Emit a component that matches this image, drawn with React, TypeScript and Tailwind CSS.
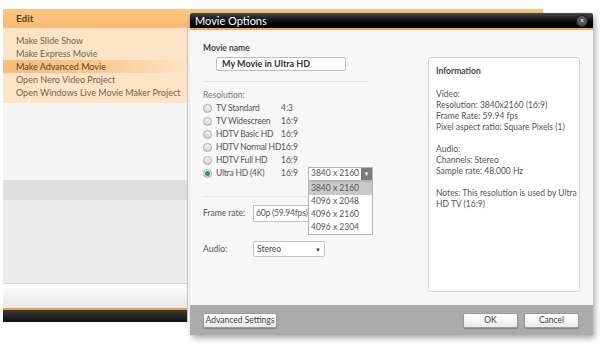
import { useState } from "react";

const menuItems = [
  "Make Slide Show",
  "Make Express Movie",
  "Make Advanced Movie",
  "Open Nero Video Project",
  "Open Windows Live Movie Maker Project",
];

const resolutions = [
  { name: "TV Standard", ratio: "4:3" },
  { name: "TV Widescreen", ratio: "16:9" },
  { name: "HDTV Basic HD", ratio: "16:9" },
  { name: "HDTV Normal HD", ratio: "16:9" },
  { name: "HDTV Full HD", ratio: "16:9" },
  { name: "Ultra HD (4K)", ratio: "16:9" },
];

const sizes = ["3840 x 2160", "4096 x 2048", "4096 x 2160", "4096 x 2304"];

function Radio({ checked }: { checked: boolean }) {
  return (
    <span className="flex h-[9px] w-[9px] flex-none items-center justify-center rounded-full border border-[#a9a9a9] bg-gradient-to-b from-[#f4f4f4] to-[#d6d6d6]">
      {checked && <span className="h-[5px] w-[5px] rounded-full bg-[#2f9a5c]" />}
    </span>
  );
}

function Button({ label, className }: { label: string; className: string }) {
  return (
    <button
      className={
        "h-[15px] whitespace-nowrap rounded-[2px] border border-[#9a9a9a] bg-gradient-to-b from-white to-[#e9e9e9] px-0 text-[8.5px] leading-none text-[#444] shadow-[0_1px_1px_rgba(0,0,0,0.25)] " +
        className
      }
    >
      {label}
    </button>
  );
}

function InfoPanel() {
  return (
    <div className="mt-[27px] flex h-[235px] w-[152px] flex-col whitespace-nowrap rounded-[3px] border border-[#d3d3d3] bg-white px-[7px] pt-[8px] text-[8.5px] leading-[11px] text-[#555]">
      <div className="font-bold text-[#444]">Information</div>
      <div className="mt-[12px]">Video:</div>
      <div>Resolution: 3840x2160 (16:9)</div>
      <div>Frame Rate: 59.94 fps</div>
      <div>Pixel aspect ratio: Square Pixels (1)</div>
      <div className="mt-[11px]">Audio:</div>
      <div>Channels: Stereo</div>
      <div>Sample rate: 48,000 Hz</div>
      <div className="mt-[11px]">Notes: This resolution is used by Ultra</div>
      <div>HD TV (16:9)</div>
    </div>
  );
}

function MovieOptions() {
  const [selected] = useState(5);

  return (
    <div className="absolute left-[190px] top-[13px] flex h-[322px] w-[403px] flex-col rounded-[2px] shadow-[2px_3px_6px_rgba(0,0,0,0.35)]">
      {/* title bar */}
      <div className="flex h-[15px] flex-none items-center justify-between rounded-t-[2px] bg-gradient-to-b from-[#4a4a4a] via-[#111] to-black pl-[5px] pr-[6px]">
        <span className="text-[11px] leading-none text-white">Movie Options</span>
        <span className="flex h-[10px] w-[10px] items-center justify-center rounded-full bg-[#555] shadow-[0_0_0_1px_#222]">
          <span className="text-[7px] font-bold leading-none text-[#ddd]">×</span>
        </span>
      </div>
      <div className="h-[2px] flex-none bg-[#f3a84a]" />
      {/* body */}
      <div className="flex flex-1 justify-between bg-[#f7f7f7] pl-[13px] pr-[13px]">
        <div className="flex w-[170px] flex-col whitespace-nowrap text-[8.5px] text-[#555]">
          <div className="mt-[13px] font-bold leading-[11px] text-[#444]">Movie name</div>
          <div className="ml-[13px] mt-[3px] flex h-[14px] w-[130px] items-center rounded-[2px] border border-[#bdbdbd] bg-white px-[5px] text-[9px] font-bold text-[#333]">
            My Movie in Ultra HD
          </div>
          <div className="mt-[10px] h-px w-[165px] bg-[#e0e0e0]" />
          <div className="mt-[8px] leading-[11px] text-[#777]">Resolution:</div>
          <div className="mt-[1px] flex flex-col">
            {resolutions.map((r, i) => (
              <div key={r.name} className="flex h-[13px] items-center">
                <Radio checked={i === selected} />
                <span className="ml-[4px] w-[65px] tracking-[-0.2px]">{r.name}</span>
                <span className="w-[27px]">{r.ratio}</span>
                {i === selected && (
                  <div className="relative">
                    <div className="flex h-[14px] w-[65px] items-center border border-[#b5b5b5] bg-white">
                      <span className="flex-1 pl-[2px] text-[#555]">3840 x 2160</span>
                      <span className="flex h-full w-[11px] items-center justify-center bg-[#7a7a7a] text-[6px] text-white">
                        ▼
                      </span>
                    </div>
                    <div className="absolute left-0 top-full z-10 flex w-[65px] flex-col border border-[#b5b5b5] bg-white">
                      {sizes.map((s, j) => (
                        <div
                          key={s}
                          className={
                            "flex h-[13px] items-center pl-[2px] text-[#555] " +
                            (j === 0 ? "bg-[#c9c9c9]" : "")
                          }
                        >
                          {s}
                        </div>
                      ))}
                    </div>
                  </div>
                )}
              </div>
            ))}
          </div>
          <div className="mt-[16px] h-px w-[165px] bg-[#e6e6e6]" />
          <div className="mt-[8px] flex items-center">
            <span className="w-[50px]">Frame rate:</span>
            {/* arrow of this select sits under the open list */}
            <div className="flex h-[17px] w-[102px] items-center border border-[#c3c3c3] bg-white pl-[2px]">
              <span className="tracking-[-0.2px]">60p (59.94fps)</span>
            </div>
          </div>
          <div className="mt-[19px] flex items-center">
            <span className="w-[50px]">Audio:</span>
            <div className="flex h-[16px] w-[72px] items-center justify-between rounded-[2px] border border-[#c3c3c3] bg-white px-[3px] text-[#444]">
              <span>Stereo</span>
              <span className="text-[6px]">▼</span>
            </div>
          </div>
        </div>
        <InfoPanel />
      </div>
      {/* footer */}
      <div className="flex h-[30px] flex-none items-center bg-[#ababab] pl-[13px] pr-[14px]">
        <Button label="Advanced Settings" className="w-[74px]" />
        <div className="flex-1" />
        <Button label="OK" className="w-[55px]" />
        <Button label="Cancel" className="ml-[6px] w-[55px]" />
      </div>
    </div>
  );
}

export default function App() {
  return (
    <div className="relative h-[346px] w-[600px] overflow-hidden bg-white font-['Lato','Noto_Sans',sans-serif]">
      {/* background window */}
      <div className="ml-[3px] mt-[9px] flex h-[313px] w-[540px] flex-col">
        <div className="flex h-[19px] flex-none items-center bg-gradient-to-b from-[#fbc784] to-[#f9b970] pl-[13px]">
          <span className="text-[10px] font-bold text-[#5a4226]">Edit</span>
        </div>
        <div className="flex flex-1">
          <div className="flex w-[185px] flex-col border-r border-[#c9c9c9]">
            <div className="flex h-[75px] flex-col whitespace-nowrap bg-[#fde4c7] pt-[6px] text-[9px] text-[#7a6048]">
              {menuItems.map((m, i) => (
                <div
                  key={m}
                  className={
                    "flex h-[13px] items-center pl-[13px] " +
                    (i === 2 ? "bg-gradient-to-r from-[#f9bd7a] via-[#fac78c] to-[#fde4c7] text-[#5e4127]" : "")
                  }
                >
                  {m}
                </div>
              ))}
            </div>
            <div className="h-[77px] bg-[#f5f5f5]" />
            <div className="h-[20px] bg-[#dfdfdf]" />
            <div className="h-[84px] border-b border-[#d6d6d6] bg-[#ececec]" />
            <div className="h-[24px] bg-gradient-to-b from-white to-[#e8e8e8]" />
            <div className="h-[2px] bg-[#e9a04a]" />
            <div className="flex-1 bg-gradient-to-b from-[#3a3a3a] to-[#111]" />
          </div>
          <div className="flex-1 bg-white" />
        </div>
      </div>
      <MovieOptions />
    </div>
  );
}
